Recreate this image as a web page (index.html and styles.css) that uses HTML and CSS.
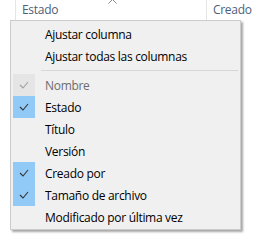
FILE: index.html
```html
<!DOCTYPE html>
<html lang="es">

<head>
    <meta charset="UTF-8">
    <title>Columnas</title>
    <link rel="stylesheet" href="styles.css">
</head>

<body>
    <div class="header">
        <div class="col col-estado">
            <span class="sort-caret">
                <svg width="9" height="5" viewBox="0 0 9 5"><path d="M0.5 4.5 L4.5 0.5 L8.5 4.5" fill="none" stroke="#8a8a8a" stroke-width="1"/></svg>
            </span>
            Estado
        </div>
        <div class="col col-creado">Creado</div>
    </div>

    <div class="menu">
        <div class="item"><span class="check"></span><span class="label">Ajustar columna</span></div>
        <div class="item"><span class="check"></span><span class="label">Ajustar todas las columnas</span></div>
        <div class="separator"></div>
        <div class="item disabled"><span class="check on"><svg width="10" height="8" viewBox="0 0 10 8"><path d="M1 4 L4 7 L9 1" fill="none" stroke="currentColor" stroke-width="1.1"/></svg></span><span class="label">Nombre</span></div>
        <div class="item"><span class="check on"><svg width="10" height="8" viewBox="0 0 10 8"><path d="M1 4 L4 7 L9 1" fill="none" stroke="currentColor" stroke-width="1.1"/></svg></span><span class="label">Estado</span></div>
        <div class="item"><span class="check"></span><span class="label">Título</span></div>
        <div class="item"><span class="check"></span><span class="label">Versión</span></div>
        <div class="item"><span class="check on"><svg width="10" height="8" viewBox="0 0 10 8"><path d="M1 4 L4 7 L9 1" fill="none" stroke="currentColor" stroke-width="1.1"/></svg></span><span class="label">Creado por</span></div>
        <div class="item"><span class="check on"><svg width="10" height="8" viewBox="0 0 10 8"><path d="M1 4 L4 7 L9 1" fill="none" stroke="currentColor" stroke-width="1.1"/></svg></span><span class="label">Tamaño de archivo</span></div>
        <div class="item"><span class="check"></span><span class="label">Modificado por última vez</span></div>
    </div>
</body>

</html>
```

FILE: styles.css
```css
body {
    margin: 0;
    background: #ffffff;
    font-family: "Open Sans", "Noto Sans", sans-serif;
    font-size: 12px;
    letter-spacing: -0.3px;
    position: relative;
    width: 253px;
    height: 246px;
    overflow: hidden;
}

.header {
    display: flex;
    padding-left: 15px;
    height: 21px;
}

.col {
    position: relative;
    border-left: 1px solid #e5e5e5;
    color: #4c607a;
    padding: 2px 0 0 6px;
    line-height: 16px;
    box-sizing: border-box;
}

.col-estado {
    width: 191px;
}

.col-creado {
    flex: 1;
}

.sort-caret {
    position: absolute;
    left: 92px;
    top: -1px;
    line-height: 0;
}

.menu {
    position: absolute;
    left: 10px;
    top: 20px;
    width: 229px;
    padding: 2px 0 1px 0;
    background: #f0f0f0;
    border: 1px solid #cccccc;
    box-shadow: 2px 2px 2px rgba(0, 0, 0, 0.35);
    color: #000000;
}

.item {
    display: flex;
    align-items: center;
    height: 22px;
}

.check {
    width: 22px;
    height: 22px;
    margin-left: 2px;
    display: flex;
    align-items: center;
    justify-content: center;
    color: #333333;
}

.check.on {
    background: #91c9f7;
}

.disabled .check.on {
    background: #e5e5e5;
    color: #a0a0a0;
}

.disabled .label {
    color: #6d6d6d;
}

.label {
    margin-left: 10px;
    padding-top: 2px;
    line-height: 16px;
}

.separator {
    height: 1px;
    background: #d7d7d7;
    margin: 3px 2px 3px 30px;
}
```
